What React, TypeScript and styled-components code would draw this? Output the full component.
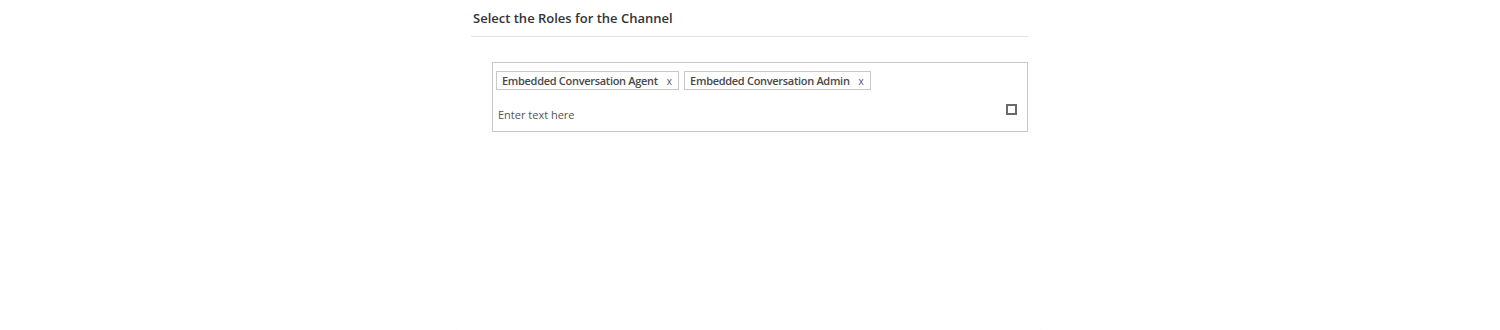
import React from "react";
import styled, { createGlobalStyle } from "styled-components";

const Global = createGlobalStyle`
  html, body { margin: 0; padding: 0; background: #ffffff; }
  body { font-family: "Open Sans", "Noto Sans", sans-serif; }
`;

const Page = styled.div`
  width: 1500px;
  height: 330px;
  display: flex;
  justify-content: center;
  box-sizing: border-box;
`;

const Card = styled.section`
  width: 588px;
  height: 330px;
  margin-left: -2px;
  box-sizing: border-box;
  border-radius: 4px;
  box-shadow: 0 0 1px rgba(0, 0, 0, 0.05);
  padding: 0 15px 0 16px;
  display: flex;
  flex-direction: column;
`;

const Header = styled.div`
  padding: 9px 0 0 2px;
  height: 37px;
  box-sizing: border-box;
  border-bottom: 1px solid #e3e3e3;
`;

const Title = styled.h2`
  margin: 0;
  font-size: 13px;
  font-weight: 600;
  color: #333333;
  line-height: 18px;
`;

const Body = styled.div`
  padding: 25px 0 0 21px;
`;

const Picker = styled.div`
  border: 1px solid #c8c8c8;
  height: 70px;
  box-sizing: border-box;
  padding: 8px 10px 0 3px;
  display: flex;
  flex-direction: column;
`;

const Tags = styled.div`
  display: flex;
  gap: 5px;
`;

const Tag = styled.span`
  display: inline-flex;
  align-items: center;
  height: 19px;
  box-sizing: border-box;
  border: 1px solid #c8c8c8;
  padding: 0 6px 0 5px;
  font-size: 11px;
  font-weight: 600;
  letter-spacing: -0.3px;
  color: #484848;
  white-space: nowrap;
`;

const Remove = styled.span`
  margin-left: 9px;
  font-size: 10px;
  font-weight: 400;
  letter-spacing: 0;
  color: #555;
`;

const InputRow = styled.div`
  display: flex;
  align-items: flex-start;
  justify-content: space-between;
  margin-top: 13px;
`;

const Placeholder = styled.span`
  font-size: 11px;
  color: #555555;
  padding-left: 2px;
  margin-top: 4px;
`;

const Check = styled.span`
  width: 11px;
  height: 11px;
  box-sizing: border-box;
  border: 2px solid #6a6a6a;
  margin-top: 1px;
`;

export default function App() {
  return (
    <>
      <Global />
      <Page>
        <Card>
          <Header>
            <Title>Select the Roles for the Channel</Title>
          </Header>
          <Body>
            <Picker>
              <Tags>
                <Tag>
                  Embedded Conversation Agent<Remove>x</Remove>
                </Tag>
                <Tag>
                  Embedded Conversation Admin<Remove>x</Remove>
                </Tag>
              </Tags>
              <InputRow>
                <Placeholder>Enter text here</Placeholder>
                <Check />
              </InputRow>
            </Picker>
          </Body>
        </Card>
      </Page>
    </>
  );
}
